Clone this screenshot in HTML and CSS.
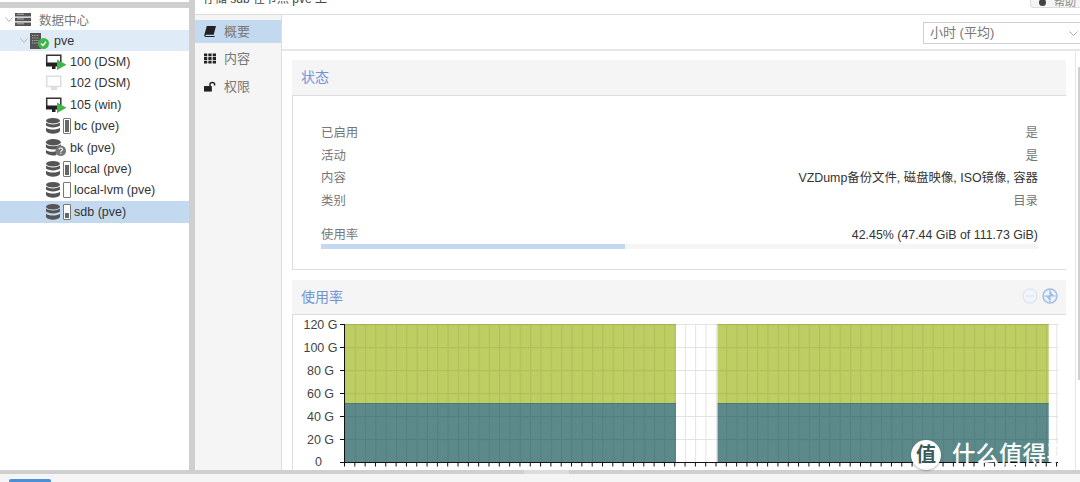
FILE: index.html
```html
<!DOCTYPE html>
<html lang="zh">
<head>
  <meta charset="UTF-8">
  <meta name="viewport" content="width=device-width, initial-scale=1.0">
  <title>存储 sdb 在节点 pve 上</title>
  <link rel="stylesheet" href="styles.css">
</head>
<body>
  <svg class="defs" width="0" height="0">
    <symbol id="vm" viewBox="0 0 22 16">
      <path d="M1.7 1.2H15.8V11H1.7Z" fill="#fff" stroke="#333" stroke-width="1.5"/>
      <path d="M1 8.5H13V12.5H10.5V15H7V12.5H1Z" fill="#222"/>
      <path d="M12 5.5L21.5 10.8L12 16Z" fill="#3fb54a"/>
    </symbol>
    <symbol id="db" viewBox="0 0 14 16">
      <ellipse cx="7" cy="2.8" rx="7" ry="2.8" fill="#555"/>
      <path d="M0 4.6C2 7 12 7 14 4.6V7.6C12 10 2 10 0 7.6Z" fill="#555"/>
      <path d="M0 9.8C2 12.2 12 12.2 14 9.8V13C12 16.6 2 16.6 0 13Z" fill="#555"/>
    </symbol>
  </svg>

  <div class="workspace">
    <div class="tree-panel">
      <div class="tree-top"></div>
      <ul class="tree">
        <li class="node root">
          <svg class="chev" viewBox="0 0 8 5"><path d="M.5.5L4 4.5L7.5.5" fill="none" stroke="#b5b5b5"/></svg>
          <svg class="ico-dc" viewBox="0 0 16 13">
            <path d="M0 0H16V3.4H0ZM0 4.8H16V8.2H0ZM0 9.6H16V13H0Z" fill="#555"/>
            <path d="M2 1.2H9M2 6H9M2 10.8H9" stroke="#ccc" stroke-width=".8"/>
          </svg>
          <span class="zh">数据中心</span>
        </li>
        <li class="node host">
          <svg class="chev" viewBox="0 0 8 5"><path d="M.5.5L4 4.5L7.5.5" fill="none" stroke="#b5b5b5"/></svg>
          <svg class="ico-host" viewBox="0 0 19 16">
            <path d="M0 0H11V16H0Z" fill="#555"/>
            <path d="M2 2.5H9M2 5H9M2 7.5H9M2 10H9" stroke="#a9a9a9" stroke-dasharray="1.4 .8"/>
            <circle cx="13.5" cy="10.5" r="5.5" fill="#3fb54a"/>
            <path d="M11 10.5L13 12.5L16 8.8" fill="none" stroke="#fff" stroke-width="1.4"/>
          </svg>
          <span>pve</span>
        </li>
        <li class="node guest">
          <svg class="ico-vm"><use href="#vm"/></svg>
          <span>100 (DSM)</span>
        </li>
        <li class="node guest">
          <svg class="ico-vm" viewBox="0 0 22 16">
            <path d="M1.7 1.2H15.8V11.5H1.7Z" fill="#fff" stroke="#ddd" stroke-width="1.5"/>
            <path d="M6 12H12V15H6Z" fill="#ddd"/>
          </svg>
          <span>102 (DSM)</span>
        </li>
        <li class="node guest">
          <svg class="ico-vm"><use href="#vm"/></svg>
          <span>105 (win)</span>
        </li>
        <li class="node store">
          <svg class="ico-db"><use href="#db"/></svg>
          <span class="bar"><i class="bar-fill full"></i></span>
          <span>bc (pve)</span>
        </li>
        <li class="node guest">
          <svg class="ico-unknown" viewBox="0 0 19 16">
            <ellipse cx="7" cy="3" rx="7" ry="3" fill="#555"/>
            <path d="M0 5C2 7.4 12 7.4 14 5V8C12 10.4 2 10.4 0 8ZM0 10C2 12.4 8 12.4 10 11V15C7 16 2 15.5 0 13Z" fill="#555"/>
            <circle cx="14" cy="11" r="5" fill="#777"/>
            <path d="M12.4 9.8C12.6 8 15.6 8 15.6 9.8C15.6 11 14 11 14 12.4M14 13.2V14.2" fill="none" stroke="#fff"/>
          </svg>
          <span>bk (pve)</span>
        </li>
        <li class="node store">
          <svg class="ico-db"><use href="#db"/></svg>
          <span class="bar"><i class="bar-fill most"></i></span>
          <span>local (pve)</span>
        </li>
        <li class="node store">
          <svg class="ico-db"><use href="#db"/></svg>
          <span class="bar"></span>
          <span>local-lvm (pve)</span>
        </li>
        <li class="node store active">
          <svg class="ico-db"><use href="#db"/></svg>
          <span class="bar"><i class="bar-fill low"></i></span>
          <span>sdb (pve)</span>
        </li>
      </ul>
    </div>

    <div class="splitter"></div>

    <div class="content">
      <div class="title-bar">
        <span class="title">存储 sdb 在节点 pve 上</span>
        <span class="help-btn"><b class="help-dot"></b>帮助</span>
      </div>

      <div class="content-body">
        <ul class="tabs">
          <li class="tab active">
            <svg class="tab-ico" viewBox="0 0 13 12"><path d="M3 0H13L10.5 9.5H2.4C1.2 9.5 1.6 11 2.6 11H11.5V12H2C.4 12 0 10.8.4 9.4Z" fill="#222"/></svg>
            <span>概要</span>
          </li>
          <li class="tab">
            <svg class="tab-ico" viewBox="0 0 13 11"><path d="M0 0H3.5V3H0ZM4.7 0H8.2V3H4.7ZM9.4 0H13V3H9.4ZM0 4H3.5V7H0ZM4.7 4H8.2V7H4.7ZM9.4 4H13V7H9.4ZM0 8H3.5V11H0ZM4.7 8H8.2V11H4.7ZM9.4 8H13V11H9.4Z" fill="#222"/></svg>
            <span>内容</span>
          </li>
          <li class="tab">
            <svg class="tab-ico" viewBox="0 0 13 11"><path d="M0 5H8.5V11H0Z" fill="#222"/><path d="M6.5 5V3C6.5 .4 11.5 .4 11.5 3V4.5" fill="none" stroke="#222" stroke-width="1.6"/></svg>
            <span>权限</span>
          </li>
        </ul>

        <div class="detail">
          <div class="toolbar">
            <div class="select">
              <span class="select-text">小时 (平均)</span>
              <svg class="select-chev" viewBox="0 0 9 5"><path d="M.5.5L4.5 4.5L8.5.5" fill="none" stroke="#aaa"/></svg>
            </div>
          </div>

          <div class="scroll-area">
            <div class="panels">
              <section class="panel">
                <h3 class="panel-head">状态</h3>
                <div class="panel-body status">
                  <div class="row"><span>已启用</span><span>是</span></div>
                  <div class="row"><span>活动</span><span>是</span></div>
                  <div class="row"><span>内容</span><span class="dark">VZDump备份文件, 磁盘映像, ISO镜像, 容器</span></div>
                  <div class="row"><span>类别</span><span>目录</span></div>
                  <div class="row usage"><span>使用率</span><span class="dark">42.45% (47.44 GiB of 111.73 GiB)</span></div>
                  <div class="progress"><div class="progress-fill"></div></div>
                </div>
              </section>

              <section class="panel">
                <h3 class="panel-head chart-head">
                  使用率
                  <span class="chart-tools">
                    <svg class="tool off" viewBox="0 0 16 16"><circle cx="8" cy="8" r="7" fill="#f2f5f9" stroke="#dde6f2" stroke-width="1.4"/><path d="M4 8H12" stroke="#dde6f2" stroke-width="1.4"/></svg>
                    <svg class="tool" viewBox="0 0 16 16"><circle cx="8" cy="8" r="7" fill="#eef3f9" stroke="#9dbde3" stroke-width="1.4"/><path d="M8 1.5V14.5M1.5 8H14.5" stroke="#9dbde3" stroke-width="1.2"/><path d="M8 3L12 8H8ZM8 13L4 8H8Z" fill="#9dbde3"/></svg>
                  </span>
                </h3>
                <div class="panel-body chart-body">
                  <svg class="chart" width="773" height="155" viewBox="293 315 773 155">
                    <defs>
                      <pattern id="grid" x="344.3" y="324" width="10.32" height="23" patternUnits="userSpaceOnUse">
                        <path d="M.5 0V23M0 .5H10.32" fill="none" stroke="#e3e3e3"/>
                      </pattern>
                      <pattern id="gridDark" x="344.3" y="324" width="10.32" height="23" patternUnits="userSpaceOnUse">
                        <path d="M.5 0V23M0 .5H10.32" fill="none" stroke="#000" stroke-opacity=".05" stroke-width="1.4"/>
                      </pattern>
                    </defs>
                    <rect x="344" y="324" width="714.5" height="138" fill="url(#grid)"/>
                    <path d="M344 324H676V404H344ZM717.5 324H1048.7V404H717.5Z" fill="#b3c548" fill-opacity=".85"/>
                    <path d="M344 404H676V462H344ZM717.5 404H1048.7V462H717.5Z" fill="#3f7577" fill-opacity=".85"/>
                    <path d="M344 324H676V462H344ZM717.5 324H1048.7V462H717.5Z" fill="url(#gridDark)"/>
                    <path d="M344 324.5H676M717.5 324.5H1048.7" stroke="#a3b553"/>
                    <path d="M344 403.5H676M717.5 403.5H1048.7" stroke="#4b7878"/>
                    <path d="M344.5 324V462M340 462.5H1058M340 324.5H344M340 347.5H344M340 370.5H344M340 393.5H344M340 416.5H344M340 439.5H344" stroke="#111" fill="none"/>
                    <line x1="344" y1="464.5" x2="1058" y2="464.5" stroke="#111" stroke-width="4" stroke-dasharray="1 9.32"/>
                    <g class="axis">
                      <text x="320.5" y="329">120 G</text>
                      <text x="320.5" y="352">100 G</text>
                      <text x="320.5" y="375">80 G</text>
                      <text x="320.5" y="398">60 G</text>
                      <text x="320.5" y="421">40 G</text>
                      <text x="320.5" y="444">20 G</text>
                      <text x="318.5" y="466">0</text>
                    </g>
                  </svg>
                </div>
              </section>
            </div>
            <div class="scrollbar"><div class="scroll-thumb"></div></div>
          </div>
        </div>
      </div>
    </div>
  </div>

  <div class="band"><span class="band-handle"></span></div>
  <div class="footer"><span class="footer-btn"></span></div>

  <div class="watermark">
    <span class="wm-logo">值</span>
    <span class="wm-text">什么值得买</span>
  </div>
</body>
</html>
```

FILE: styles.css
```css
* {
  box-sizing: border-box;
}

html, body {
  height: 482px;
  overflow: hidden;
}

body {
  margin: 0;
  position: relative;
  background-color: #f5f5f5;
  color: #333;
  font-family: "Liberation Sans", "Noto Sans CJK SC", sans-serif;
  font-size: 12.5px;
}

ul {
  list-style: none;
  margin: 0;
  padding: 0;
}

.defs {
  position: absolute;
}

.workspace {
  display: flex;
  height: 470px;
}

/* left tree */
.tree-panel {
  width: 189px;
  background-color: white;
}

.tree-top {
  height: 8px;
  border-top: 2px solid white;
  background-color: #cfcfcf;
}

.tree {
  padding-top: 0.6px;
}

.node {
  display: flex;
  align-items: center;
  height: 21.4px;
  color: #333;
  white-space: nowrap;
}

.node.root {
  padding-left: 5px;
}

.node.root .zh {
  color: #777;
  margin-left: 8px;
}

.node.host {
  padding-left: 20px;
  background-color: #dfebf7;
}

.node.host span {
  margin-left: 5px;
}

.node.guest {
  padding-left: 45px;
}

.node.guest span {
  margin-left: 3px;
}

.node.store {
  padding-left: 46px;
}

.node.active {
  background-color: #c2d9f0;
}

.chev {
  width: 8px;
  height: 5px;
  margin-right: 2px;
}

.ico-dc {
  width: 16px;
  height: 13px;
}

.ico-host {
  width: 19px;
  height: 16px;
}

.ico-vm {
  width: 22px;
  height: 16px;
}

.ico-unknown {
  width: 22px;
  height: 17px;
}

.ico-db {
  width: 14px;
  height: 16px;
}

.bar {
  display: flex;
  align-items: flex-end;
  width: 8px;
  height: 16px;
  margin: 0 3px 0 3px;
  padding: 1px;
  border: 1px solid #777;
  border-radius: 1px;
  background-color: white;
}

.bar-fill {
  display: block;
  width: 100%;
  background-color: #666;
}

.bar-fill.full {
  height: 100%;
}

.bar-fill.most {
  height: 85%;
}

.bar-fill.low {
  height: 40%;
}

.splitter {
  width: 6px;
  background-color: #cfcfcf;
}

/* right side */
.content {
  flex: 1;
  display: flex;
  flex-direction: column;
  min-width: 0;
  background-color: white;
}

.title-bar {
  display: flex;
  justify-content: space-between;
  height: 15px;
  border-bottom: 1px solid #ddd;
  overflow: hidden;
}

.title {
  margin: -9px 0 0 8px;
  color: #444;
  font-size: 12px;
  line-height: 16px;
}

.help-btn {
  width: 50px;
  height: 12px;
  margin-top: -4px;
  padding-left: 8px;
  border: 1px solid #ddd;
  border-right: none;
  border-radius: 0 0 0 4px;
  background-color: #f5f5f5;
  color: #888;
  font-size: 11px;
  line-height: 10px;
}

.help-dot {
  display: inline-block;
  width: 7px;
  height: 7px;
  margin-right: 8px;
  border-radius: 50%;
  background-color: #444;
}

.content-body {
  flex: 1;
  display: flex;
  min-height: 0;
}

.tabs {
  width: 87px;
  padding-top: 5px;
  border-right: 1px solid #ddd;
  background-color: #f5f5f5;
}

.tab {
  display: flex;
  align-items: center;
  gap: 8px;
  height: 23px;
  margin-bottom: 4.4px;
  padding-left: 9px;
  color: #777;
  font-size: 13px;
}

.tab span {
  margin-bottom: 2px;
}

.tab.active {
  background-color: #c2d9f0;
}

.tab-ico {
  width: 12px;
  height: 11px;
}

.detail {
  flex: 1;
  display: flex;
  flex-direction: column;
  min-width: 0;
}

.toolbar {
  display: flex;
  justify-content: flex-end;
  height: 36px;
  padding-top: 7px;
  border-bottom: 2px solid #e6e6e6;
}

.select {
  display: flex;
  align-items: center;
  justify-content: space-between;
  width: 157px;
  height: 22px;
  padding: 0 2px 0 6px;
  border: 1px solid #d0d0d0;
  border-right: none;
  color: #777;
  font-size: 13px;
}

.select-text {
  margin-bottom: 3px;
}

.select-chev {
  width: 9px;
  height: 5px;
}

.scroll-area {
  flex: 1;
  display: flex;
  min-height: 0;
}

.panels {
  width: 785px;
  padding: 9px 0 0 10px;
  overflow: hidden;
}

.panel {
  width: 775px;
  margin-bottom: 10px;
}

.panel-head {
  display: flex;
  align-items: center;
  justify-content: space-between;
  height: 35px;
  margin: 0;
  padding: 0 9px 3px 9px;
  background-color: #f5f5f5;
  color: #7194d6;
  font-size: 14px;
  font-weight: normal;
}

.panel-head.chart-head {
  height: 34px;
  padding-bottom: 2px;
}

.panel-body {
  border: 1px solid #ddd;
}

.status {
  height: 175px;
  padding: 26px 28px 0;
  font-size: 12.4px;
}

.row {
  display: flex;
  justify-content: space-between;
  height: 22.7px;
  line-height: 22px;
  color: #777;
}

.row .dark {
  color: #333;
}

.row.usage {
  margin-top: 11px;
  height: 20px;
}

.progress {
  height: 5px;
  background-color: #f5f5f5;
}

.progress-fill {
  width: 42.45%;
  height: 100%;
  background-color: #c2d9f0;
}

.chart-tools {
  display: flex;
  gap: 4px;
}

.tool {
  width: 16px;
  height: 16px;
}

.chart-body {
  height: 160px;
  border-bottom: none;
}

.chart {
  display: block;
}

.axis text {
  fill: #444;
  font-size: 12.5px;
  text-anchor: middle;
}

.scrollbar {
  flex: 1;
  border-left: 1px solid #e6e6e6;
  margin-left: 9px;
  padding: 16px 0 0 2px;
}

.scroll-thumb {
  width: 2px;
  height: 313px;
  background-color: #cfcfcf;
}

.band {
  display: flex;
  justify-content: flex-start;
  height: 4px;
  background-color: #cfcfcf;
}

.band-handle {
  width: 45px;
  height: 4px;
  margin-left: 524px;
  background-color: #dcdcdc;
}

.footer {
  height: 8px;
  padding: 5px 0 0 9px;
}

.footer-btn {
  display: block;
  width: 42px;
  height: 3px;
  background-color: #4a90d9;
  border-radius: 2px 2px 0 0;
}

/* site watermark sits over the chart */
.watermark {
  position: absolute;
  left: 911px;
  top: 440px;
  display: flex;
  align-items: center;
  gap: 11px;
  color: white;
}

.wm-logo {
  width: 30px;
  height: 30px;
  border-radius: 50%;
  background-color: white;
  box-shadow: 0 1px 2px rgba(0, 0, 0, 0.3);
  color: #3a5a5c;
  font-size: 20px;
  font-weight: bold;
  line-height: 30px;
  text-align: center;
}

.wm-text {
  font-size: 23.5px;
  font-weight: 500;
  line-height: 30px;
  white-space: nowrap;
}
```
